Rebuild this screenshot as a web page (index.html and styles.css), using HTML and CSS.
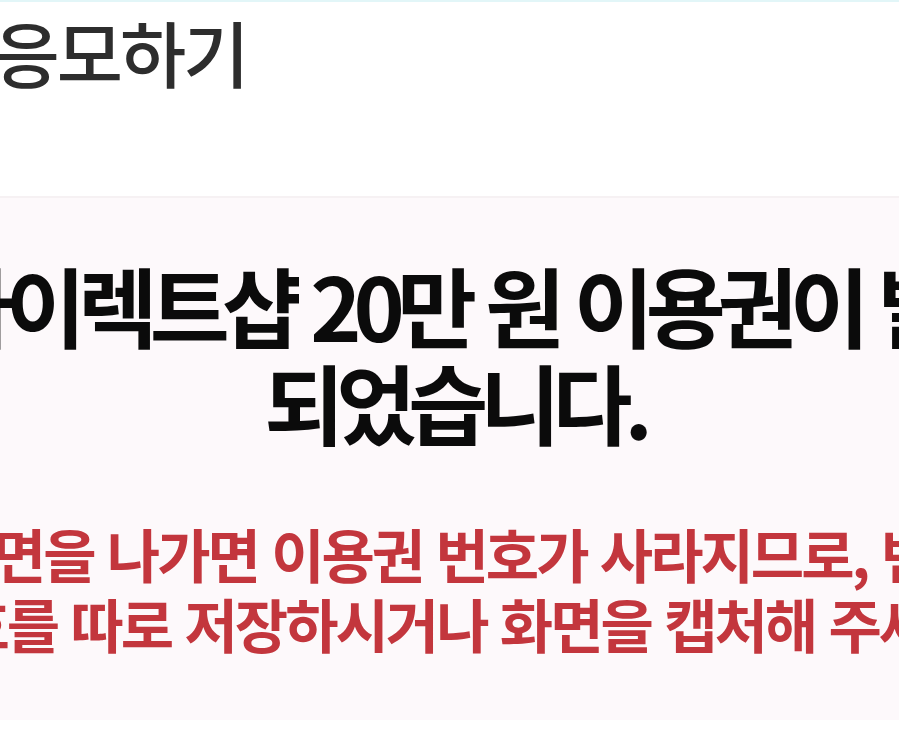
FILE: index.html
```html
<!DOCTYPE html>
<html lang="ko">
<head>
<meta charset="utf-8">
<title>응모하기</title>
<link rel="stylesheet" href="styles.css">
</head>
<body>
<div class="sheet">
  <div class="topline"></div>
  <header class="header">
    <h1 class="title">응모하기</h1>
  </header>
  <section class="notice">
    <p class="headline">
      <span class="headline-line headline-line--first">다이렉트샵 20만 원 이용권이 발급</span>
      <span class="headline-line headline-line--second">되었습니다.</span>
    </p>
    <p class="warning">
      <span class="warning-line">화면을 나가면 이용권 번호가 사라지므로, 번</span>
      <span class="warning-line warning-line--second">호를 따로 저장하시거나 화면을 캡처해 주세요.</span>
    </p>
  </section>
</div>
</body>
</html>
```
FILE: styles.css
```css
html, body {
  margin: 0;
  padding: 0;
  background: #ffffff;
}
body {
  display: flex;
  justify-content: center;
  overflow: hidden;
  width: 899px;
  height: 750px;
  font-family: "Noto Sans CJK KR", "Noto Sans", sans-serif;
}
.sheet {
  flex: 0 0 1120px;
  width: 1120px;
  display: flex;
  flex-direction: column;
}
.topline {
  height: 2px;
  background: #e2f6f8;
}
.header {
  height: 194px;
  box-sizing: border-box;
  padding: 9px 0 0 104px;
}
.title {
  margin: 0;
  font-size: 72px;
  line-height: 80px;
  font-weight: 500;
  color: #2d2d2d;
  letter-spacing: -3px;
  white-space: nowrap;
}
.notice {
  height: 524px;
  box-sizing: border-box;
  background: #fdf9fb;
  border-top: 2px solid #f6f1f3;
  padding-top: 58px;
}
.headline {
  margin: 0;
  display: flex;
  flex-direction: column;
  align-items: center;
  font-size: 87px;
  line-height: 97px;
  font-weight: 700;
  color: #0b0b0b;
  letter-spacing: -8px;
}
.headline-line {
  white-space: nowrap;
}
.headline-line--first {
  padding-left: 57px;
}
.headline-line--second {
  padding-left: 10px;
}
.warning {
  margin: 68px 0 0;
  padding-left: 53px;
  display: flex;
  flex-direction: column;
  font-size: 58px;
  line-height: 70px;
  font-weight: 700;
  color: #c3363d;
  letter-spacing: -3px;
}
.warning-line {
  white-space: nowrap;
}
.warning-line--second {
  padding-left: 14px;
}
```
